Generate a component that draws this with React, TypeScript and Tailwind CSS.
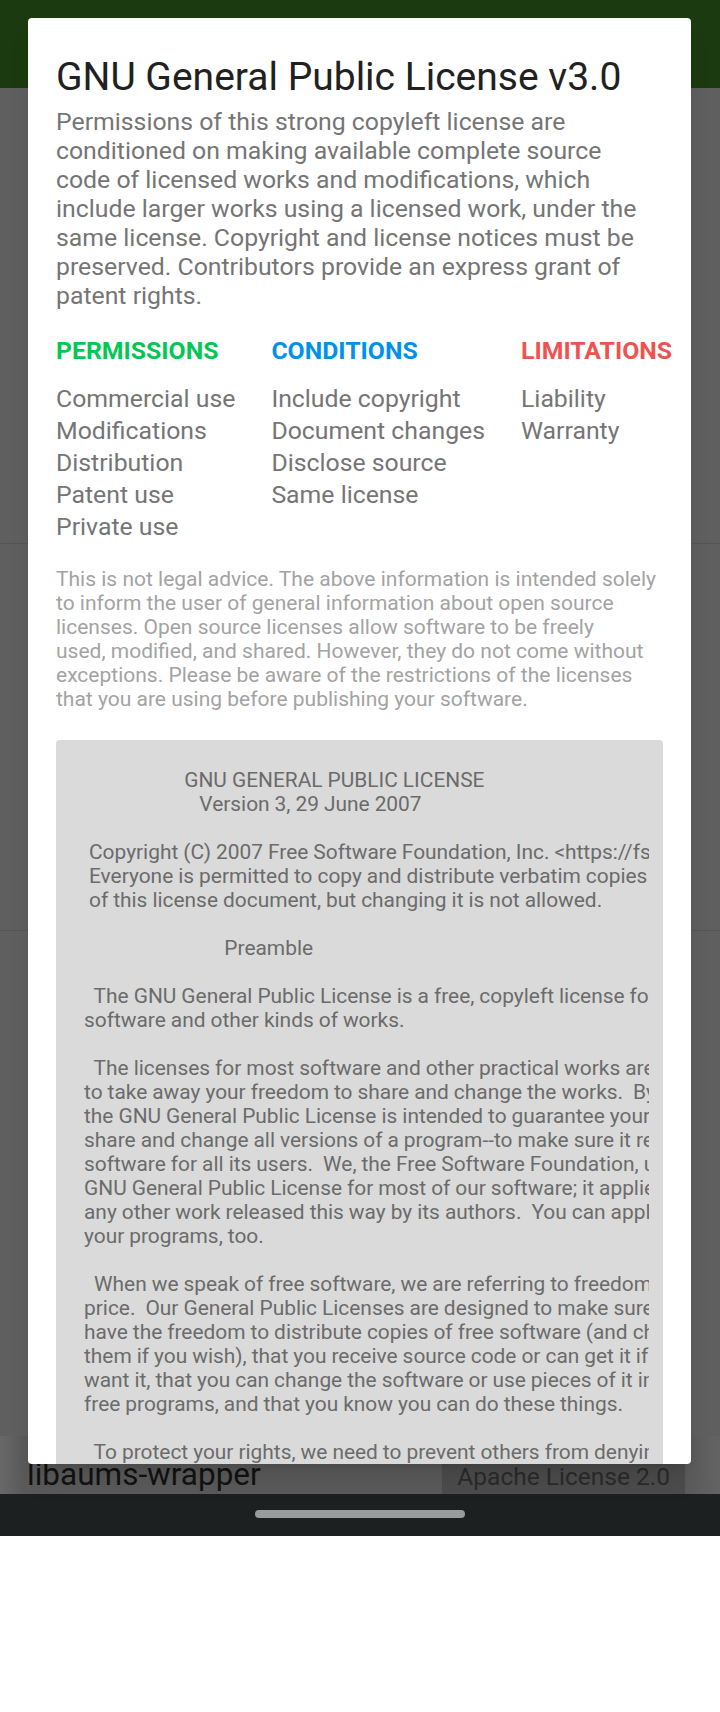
import React from "react";

const summary: string[] = [
  "Permissions of this strong copyleft license are",
  "conditioned on making available complete source",
  "code of licensed works and modifications, which",
  "include larger works using a licensed work, under the",
  "same license. Copyright and license notices must be",
  "preserved. Contributors provide an express grant of",
  "patent rights.",
];

const disclaimer: string[] = [
  "This is not legal advice. The above information is intended solely",
  "to inform the user of general information about open source",
  "licenses. Open source licenses allow software to be freely",
  "used, modified, and shared. However, they do not come without",
  "exceptions. Please be aware of the restrictions of the licenses",
  "that you are using before publishing your software.",
];

interface Column {
  title: string;
  color: string;
  items: string[];
}

const columns: Column[] = [
  {
    title: "PERMISSIONS",
    color: "text-[#00c853]",
    items: ["Commercial use", "Modifications", "Distribution", "Patent use", "Private use"],
  },
  {
    title: "CONDITIONS",
    color: "text-[#0091ea]",
    items: ["Include copyright", "Document changes", "Disclose source", "Same license"],
  },
  {
    title: "LIMITATIONS",
    color: "text-[#ef5350]",
    items: ["Liability", "Warranty"],
  },
];

const licenseText = `                    GNU GENERAL PUBLIC LICENSE
                       Version 3, 29 June 2007

 Copyright (C) 2007 Free Software Foundation, Inc. <https://fsf.org/>
 Everyone is permitted to copy and distribute verbatim copies
 of this license document, but changing it is not allowed.

                            Preamble

  The GNU General Public License is a free, copyleft license for
software and other kinds of works.

  The licenses for most software and other practical works are designed
to take away your freedom to share and change the works.  By contrast,
the GNU General Public License is intended to guarantee your freedom to
share and change all versions of a program--to make sure it remains free
software for all its users.  We, the Free Software Foundation, use the
GNU General Public License for most of our software; it applies also to
any other work released this way by its authors.  You can apply it to
your programs, too.

  When we speak of free software, we are referring to freedom, not
price.  Our General Public Licenses are designed to make sure that you
have the freedom to distribute copies of free software (and charge for
them if you wish), that you receive source code or can get it if you
want it, that you can change the software or use pieces of it in new
free programs, and that you know you can do these things.

  To protect your rights, we need to prevent others from denying you
these rights or asking you to surrender the rights.  Therefore, you have`;

const LicenseDialog: React.FC = () => {
  return (
    <div className="absolute left-[28px] top-[18px] w-[663px] h-[1446px] bg-white rounded-[4px] overflow-hidden shadow-xl">
      <div className="px-7 pt-[39px]">
        {/* Title */}
        <h2 className="text-[39px] leading-[41px] text-[#212121] whitespace-nowrap">
          GNU General Public License v3.0
        </h2>

        {/* Summary */}
        <div className="mt-[9px] text-[24.8px] leading-[29px] text-[#757575]">
          {summary.map((line, i) => (
            <div key={i} className="whitespace-nowrap">
              {line}
            </div>
          ))}
        </div>

        {/* Rules table */}
        <div className="mt-[26px] flex gap-[36px]">
          {columns.map((col) => (
            <div key={col.title} className="shrink-0">
              <div className={`text-[24.8px] leading-[29px] font-bold whitespace-nowrap ${col.color}`}>
                {col.title}
              </div>
              <div className="mt-[18px] text-[24.8px] leading-[32px] text-[#757575]">
                {col.items.map((item) => (
                  <div key={item} className="whitespace-nowrap">
                    {item}
                  </div>
                ))}
              </div>
            </div>
          ))}
        </div>

        {/* Disclaimer */}
        <div className="mt-[24px] text-[21px] leading-[24px] text-[#a3a3a3]">
          {disclaimer.map((line, i) => (
            <div key={i} className="whitespace-nowrap">
              {line}
            </div>
          ))}
        </div>

        {/* Full license text */}
        <div className="mt-[29px] bg-[#dadada] rounded-[4px] pl-[28px] pr-[14px] pt-[28px] pb-[28px]">
          <div className="overflow-hidden">
            <pre className="font-[Roboto,sans-serif] text-[20.9px] leading-[24px] [word-spacing:-0.17px] text-[#6b6b6b] whitespace-pre">
              {licenseText}
            </pre>
          </div>
        </div>
      </div>
    </div>
  );
};

const App: React.FC = () => {
  return (
    <div className="relative w-[720px] h-[1712px] flex flex-col bg-white overflow-hidden font-[Roboto,sans-serif]">
      {/* App bar behind scrim */}
      <div className="h-[88px] shrink-0 bg-[#1c3a10]" />

      {/* License list behind scrim */}
      <div className="flex-1 flex flex-col bg-[#5f5f5f]">
        <div className="h-[456px] shrink-0 border-b border-[#555555]" />
        <div className="h-[387px] shrink-0 border-b border-[#555555]" />
        <div className="h-[505px] shrink-0" />
        <div className="flex-1 flex items-end justify-between pl-[27px] pr-[35px] bg-[linear-gradient(90deg,#686868_0px,#5a5a5a_24px,#5a5a5a_686px,#636363_720px)]">
          <div className="text-[31.5px] leading-[37px] pb-[1px] text-[#121212] whitespace-nowrap">
            libaums-wrapper
          </div>
          <div className="bg-[#4c4c4c] px-[15px] pt-[10px] pb-[3px] text-[24.5px] leading-[29px] text-[#2a2a2a] whitespace-nowrap">
            Apache License 2.0
          </div>
        </div>
      </div>

      {/* Navigation bar */}
      <div className="h-[42px] shrink-0 bg-[#1d2021] flex justify-center pt-[16px]">
        <div className="w-[210px] h-[8px] rounded-full bg-[#9a9b9b]" />
      </div>

      <div className="h-[176px] shrink-0 bg-white" />

      <LicenseDialog />
    </div>
  );
};

export default App;
